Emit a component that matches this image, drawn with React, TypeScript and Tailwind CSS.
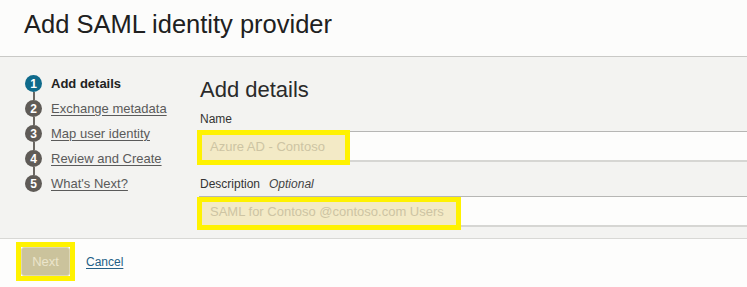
import React from 'react'

const steps = ['Add details', 'Exchange metadata', 'Map user identity', 'Review and Create', "What's Next?"]

export default function App() {
  return (
    <div className="w-[747px] h-[287px] overflow-hidden flex flex-col bg-[#fdfdfc] text-[#222]" style={{ fontFamily: '"Liberation Sans", Arial, sans-serif' }}>
      {/* header */}
      <div className="h-[57px] shrink-0 border-b border-[#c9c9c6] bg-[#fcfcfb] pl-[24px] pt-[9px]">
        <h1 className="text-[25.5px] leading-[30px] font-normal text-[#202020]">Add SAML identity provider</h1>
      </div>

      {/* body */}
      <div className="h-[182px] shrink-0 flex bg-[#f3f3f1] border-b border-[#d8d8d5]">
        {/* steps */}
        <div className="w-[199px] shrink-0 flex pl-[25px] pt-[14px]">
          <div className="flex flex-col items-center pt-[4px]">
            {steps.map((s, i) => (
              <React.Fragment key={s}>
                {i > 0 && <div className="w-[2px] h-[8px] bg-[#6b6762]" />}
                <div
                  className={
                    'w-[17px] h-[17px] rounded-full flex items-center justify-center text-white text-[12px] font-bold leading-none ' +
                    (i === 0 ? 'bg-[#0f6a8b]' : 'bg-[#5f5b57]')
                  }
                >
                  {i + 1}
                </div>
              </React.Fragment>
            ))}
          </div>
          <div className="flex flex-col pl-[9px]">
            {steps.map((s, i) => (
              <div key={s} className="h-[25px] flex items-center text-[13px] leading-none">
                {i === 0 ? (
                  <span className="font-bold text-[#222]">{s}</span>
                ) : (
                  <span className="underline underline-offset-2 text-[#5a5a5a]">{s}</span>
                )}
              </div>
            ))}
          </div>
        </div>

        {/* form */}
        <div className="flex-1 flex flex-col pt-[20px]">
          <h2 className="pl-[1px] text-[22px] leading-[25px] font-normal text-[#2a2a2a]">Add details</h2>
          <div className="mt-[10px] pl-[1px] text-[12px] leading-[14px] text-[#333]">Name</div>
          <div className="relative mt-[5px] h-[31px] bg-[#fdfdfc] border-t border-[#b6b6b4] border-b-2 border-b-[#d6d6d3]">
            <div className="absolute -left-[2px] -top-[2px] w-[153px] h-[35px] border-[5px] border-[#fff200] bg-[#f3eac6] flex items-center pl-[8px] pb-[1px] text-[13px] text-[#cdc4a3]">
              Azure AD - Contoso
            </div>
          </div>
          <div className="mt-[15px] pl-[1px] text-[12px] leading-[14px] text-[#333] flex gap-[9px]">
            <span>Description</span>
            <span className="italic text-[#444]">Optional</span>
          </div>
          <div className="relative mt-[5px] h-[31px] bg-[#fdfdfc] border-t border-[#b6b6b4] border-b-2 border-b-[#d6d6d3]">
            <div className="absolute -left-[2px] top-0 w-[264px] h-[33px] border-[5px] border-[#fff200] bg-[#f3eac6] flex items-center pl-[8px] pb-[3px] text-[13px] text-[#cdc4a3]">
              SAML for Contoso @contoso.com Users
            </div>
          </div>
        </div>
      </div>

      {/* footer */}
      <div className="flex-1 flex items-start pl-[16px] pt-[3px] bg-[#fdfdfc]">
        <div className="border-[5px] border-[#fff200]">
          <button className="w-[49px] h-[29px] rounded-[3px] border border-[#ddd6b6] bg-[#cbc39c] text-[13px] text-[#ebe5cb]">
            Next
          </button>
        </div>
        <a className="ml-[11px] mt-[13px] text-[12px] leading-[14px] underline underline-offset-2 text-[#245f86]">Cancel</a>
      </div>
    </div>
  )
}
